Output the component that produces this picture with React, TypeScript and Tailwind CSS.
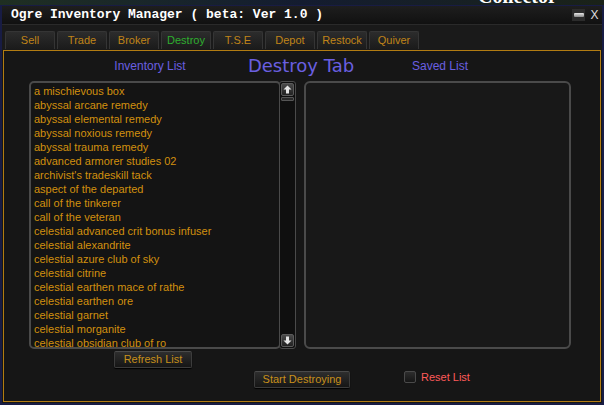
const tabs = ["Sell", "Trade", "Broker", "Destroy", "T.S.E", "Depot", "Restock", "Quiver"];

const items = [
  "a mischievous box",
  "abyssal arcane remedy",
  "abyssal elemental remedy",
  "abyssal noxious remedy",
  "abyssal trauma remedy",
  "advanced armorer studies 02",
  "archivist's tradeskill tack",
  "aspect of the departed",
  "call of the tinkerer",
  "call of the veteran",
  "celestial advanced crit bonus infuser",
  "celestial alexandrite",
  "celestial azure club of sky",
  "celestial citrine",
  "celestial earthen mace of rathe",
  "celestial earthen ore",
  "celestial garnet",
  "celestial morganite",
  "celestial obsidian club of ro",
];

const ui = "font-['Liberation_Sans',Arial,sans-serif] text-[11px]";

function GameButton({ label, width }: { label: string; width: string }) {
  return (
    <button
      className={`${ui} ${width} flex h-[17px] items-center justify-center rounded-[2px] border border-[#3c3c3c] border-t-[#4a4a4a] bg-gradient-to-b from-[#2e2e2e] to-[#161616] text-[#c8901a] shadow-[0_1px_1px_#000]`}
    >
      {label}
    </button>
  );
}

function Arrow({ down }: { down?: boolean }) {
  return (
    <svg width="9" height="9" viewBox="0 0 9 9" className={down ? "rotate-180" : ""}>
      <path d="M4.5 0.5 L8.5 4.5 H6 V8.5 H3 V4.5 H0.5 Z" fill="#e6e6e6" />
    </svg>
  );
}

export default function App() {
  return (
    <div className="flex h-[405px] w-[604px] flex-col overflow-hidden bg-[#0c1222]">
      {/* game world peeking above the window */}
      <div className="flex h-[5px] bg-gradient-to-r from-[#1f2f22] via-[#141c30] to-[#1a2218]">
        <span className="ml-[478px] -mt-[14px] h-[19px] overflow-hidden font-['Liberation_Serif',serif] text-[20px] font-bold leading-none text-white">
          Collector
        </span>
      </div>

      <div className="flex flex-1 flex-col border-x-2 border-b-2 border-t border-[#181c44] bg-[#161616]">
        {/* title bar */}
        <div className="flex h-[18px] items-center bg-gradient-to-b from-[#1e1e1e] to-[#111] pb-[2px] pl-[9px]">
          <span className="font-['Liberation_Mono',monospace] text-[13px] font-bold leading-none text-white">
            Ogre Inventory Manager ( beta: Ver 1.0 )
          </span>
          <div className="ml-auto mr-[2px] mt-[2px] flex gap-[4px]">
            <div className="flex h-[12px] w-[13px] items-center justify-center bg-[#2c2c2c]">
              <div className="h-[4px] w-[10px] rounded-[1px] bg-gradient-to-b from-[#e8e8e8] to-[#8a8a8a]" />
            </div>
            <div className="flex h-[12px] w-[11px] items-center justify-center font-['Liberation_Sans',sans-serif] text-[12px] leading-none text-[#ddd]">
              X
            </div>
          </div>
        </div>

        {/* tab strip */}
        <div className="flex h-[26px] items-end gap-[2px] border-t border-[#2a2a2a] bg-[#1a1a1a] px-[3px] pb-px">
          {tabs.map((t) => (
            <div
              key={t}
              className={`${ui} flex h-[18px] w-[50px] items-center justify-center rounded-t-[2px] border border-b-0 border-[#353535] bg-gradient-to-b from-[#2c2c2c] to-[#1b1b1b] ${
                t === "Destroy" ? "text-[#2fae2f]" : "text-[#c08418]"
              }`}
            >
              {t}
            </div>
          ))}
        </div>

        {/* gold frame */}
        <div className="mx-px mb-px flex flex-1 flex-col border border-[#b27c12] bg-[#161616]">
          <div className="flex h-[30px] items-center pl-[56px]">
            <div className={`${ui} w-[180px] text-center text-[12px] text-[#6a5fe0]`}>Inventory List</div>
            <div className="w-[122px] text-center font-['DejaVu_Sans',sans-serif] text-[18px] leading-none text-[#6a5fe0]">
              Destroy Tab
            </div>
            <div className={`${ui} w-[156px] text-center text-[12px] text-[#6a5fe0]`}>Saved List</div>
          </div>

          <div className="flex h-[268px] pl-[25px]">
            <div className="flex w-[267px]">
              <div className="flex w-[252px] flex-col overflow-hidden rounded-[5px] border-2 border-[#4a4a4a] bg-[#141414] pl-[3px] pt-px">
                {items.map((it) => (
                  <div key={it} className={`${ui} h-[14px] whitespace-nowrap text-[10.8px] leading-[14px] text-[#d2900e]`}>
                    {it}
                  </div>
                ))}
              </div>
              <div className="-ml-[2px] flex w-[17px] flex-col rounded-[3px] border border-[#4a4a4a] bg-[#0f0f0f] p-px">
                <div className="flex h-[13px] items-center justify-center rounded-[2px] border border-[#5a5a5a] bg-gradient-to-b from-[#4a4a4a] to-[#222]">
                  <Arrow />
                </div>
                <div className="mt-px h-[4px] rounded-[1px] border border-[#555] bg-[#2a2a2a]" />
                <div className="flex-1" />
                <div className="flex h-[13px] items-center justify-center rounded-[2px] border border-[#5a5a5a] bg-gradient-to-b from-[#4a4a4a] to-[#222]">
                  <Arrow down />
                </div>
              </div>
            </div>
            <div className="ml-[8px] w-[267px] rounded-[6px] border-2 border-[#4a4a4a] bg-[#181818]" />
          </div>

          <div className="flex pl-[110px] pt-[2px]">
            <GameButton label="Refresh List" width="w-[78px]" />
          </div>
          <div className="flex items-center pl-[250px] pt-[3px]">
            <GameButton label="Start Destroying" width="w-[96px]" />
            <div className="ml-[54px] -mt-[5px] flex items-center gap-[5px]">
              <div className="h-[12px] w-[12px] rounded-[2px] border border-[#4a4a4a] bg-gradient-to-b from-[#2e2e2e] to-[#161616]" />
              <span className={`${ui} text-[#ff5a5a]`}>Reset List</span>
            </div>
          </div>
        </div>
      </div>
    </div>
  );
}
